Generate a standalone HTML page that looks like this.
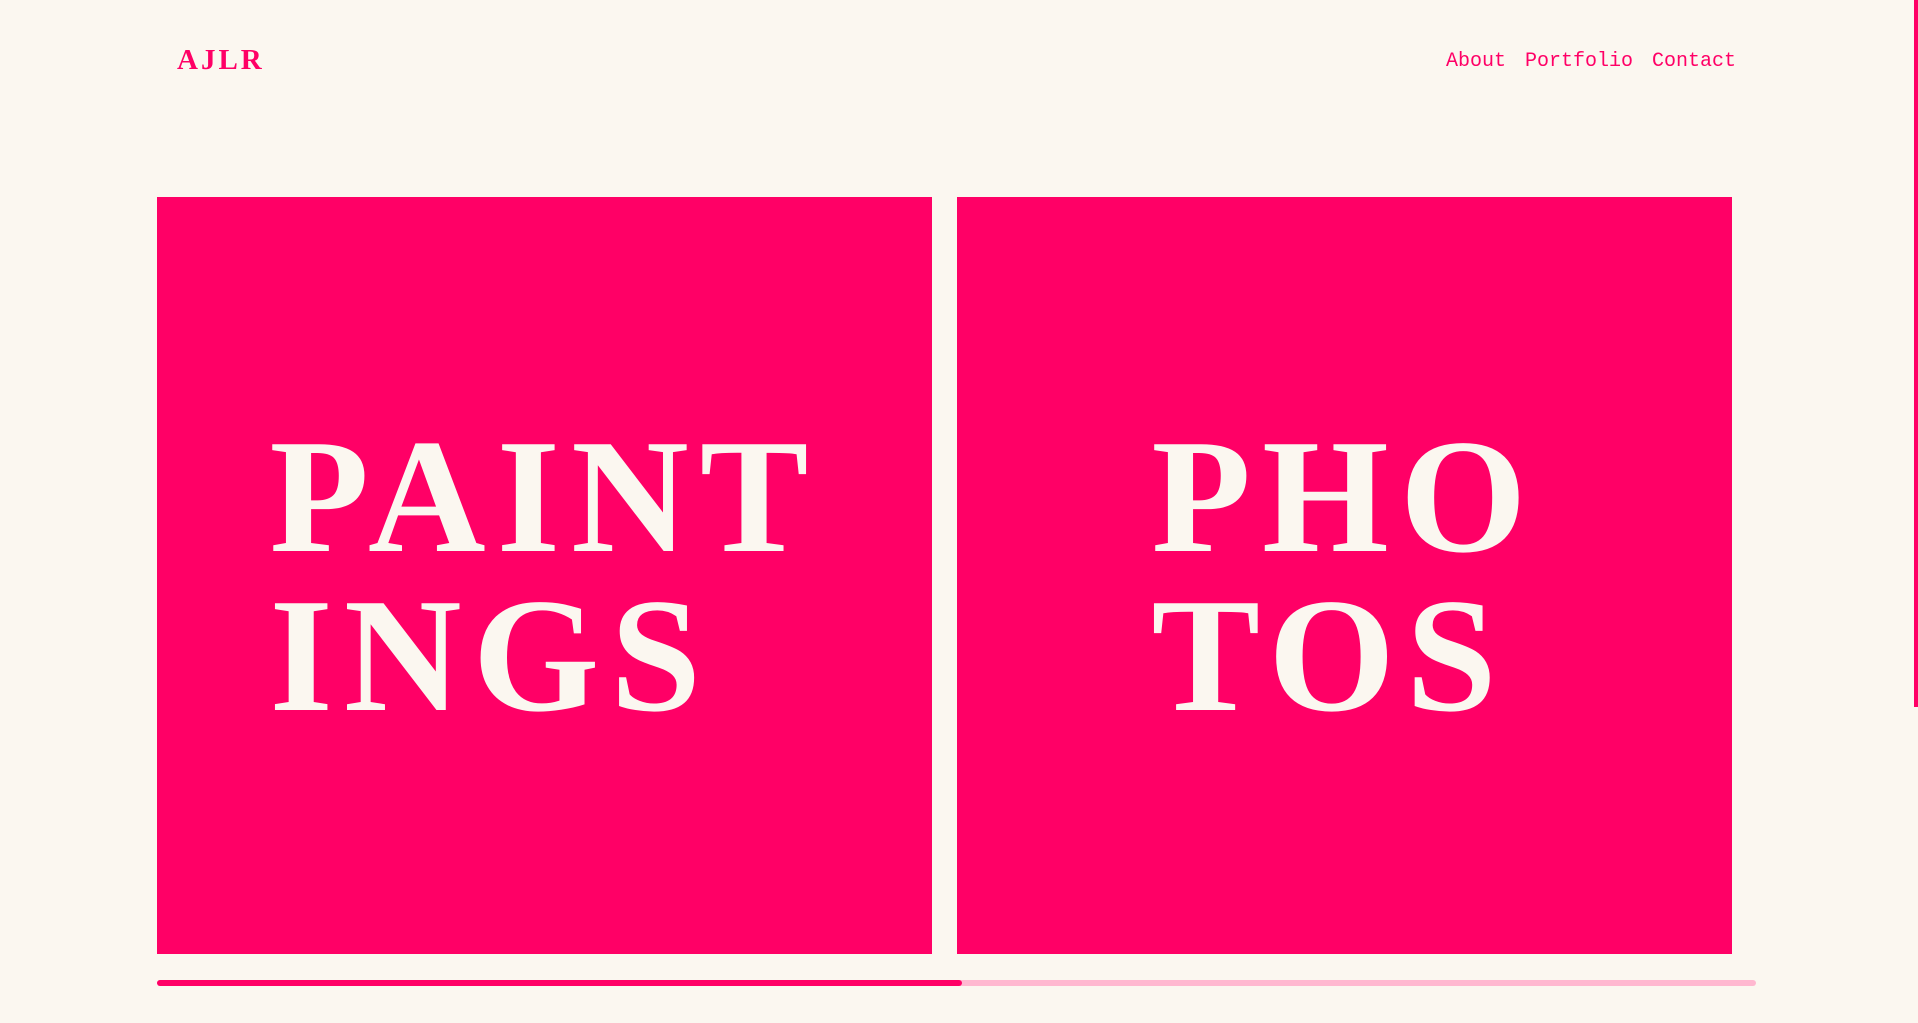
<!DOCTYPE html>
<html><head><meta charset="utf-8"><style>
html,body{margin:0;padding:0;background:#fbf7f0;width:1918px;height:1023px;overflow:hidden;position:relative}
.logo{position:absolute;left:177px;top:44px;font:bold 29px "Liberation Serif",serif;color:#ff0066;letter-spacing:3px}
.nav{position:absolute;left:1446px;top:50px;font:20px "Liberation Mono",monospace;color:#ff0066}
.nav span{margin-right:19px}
.panel{position:absolute;top:197px;height:757px;width:775px;background:#ff0066;display:flex;align-items:center;justify-content:center}
.t{font:bold 163px/159px "Liberation Serif",serif;color:#fbf7f0;letter-spacing:11px;text-align:left;margin-top:2px}
.bar{position:absolute;top:980px;height:6px;border-radius:3px}
.sb{position:absolute;right:0;top:0;width:4px;height:707px;background:#ff0066}
</style></head><body>
<div class="logo">AJLR</div>
<div class="nav"><span>About</span><span>Portfolio</span><span style="margin:0">Contact</span></div>
<div class="panel" style="left:157px"><div class="t">PAINT<br>INGS</div></div>
<div class="panel" style="left:957px"><div class="t">PHO<br>TOS</div></div>
<div class="bar" style="left:157px;width:1599px;background:#ffb8d0"></div>
<div class="bar" style="left:157px;width:805px;background:#ff0066"></div>
<div class="sb"></div>
</body></html>
